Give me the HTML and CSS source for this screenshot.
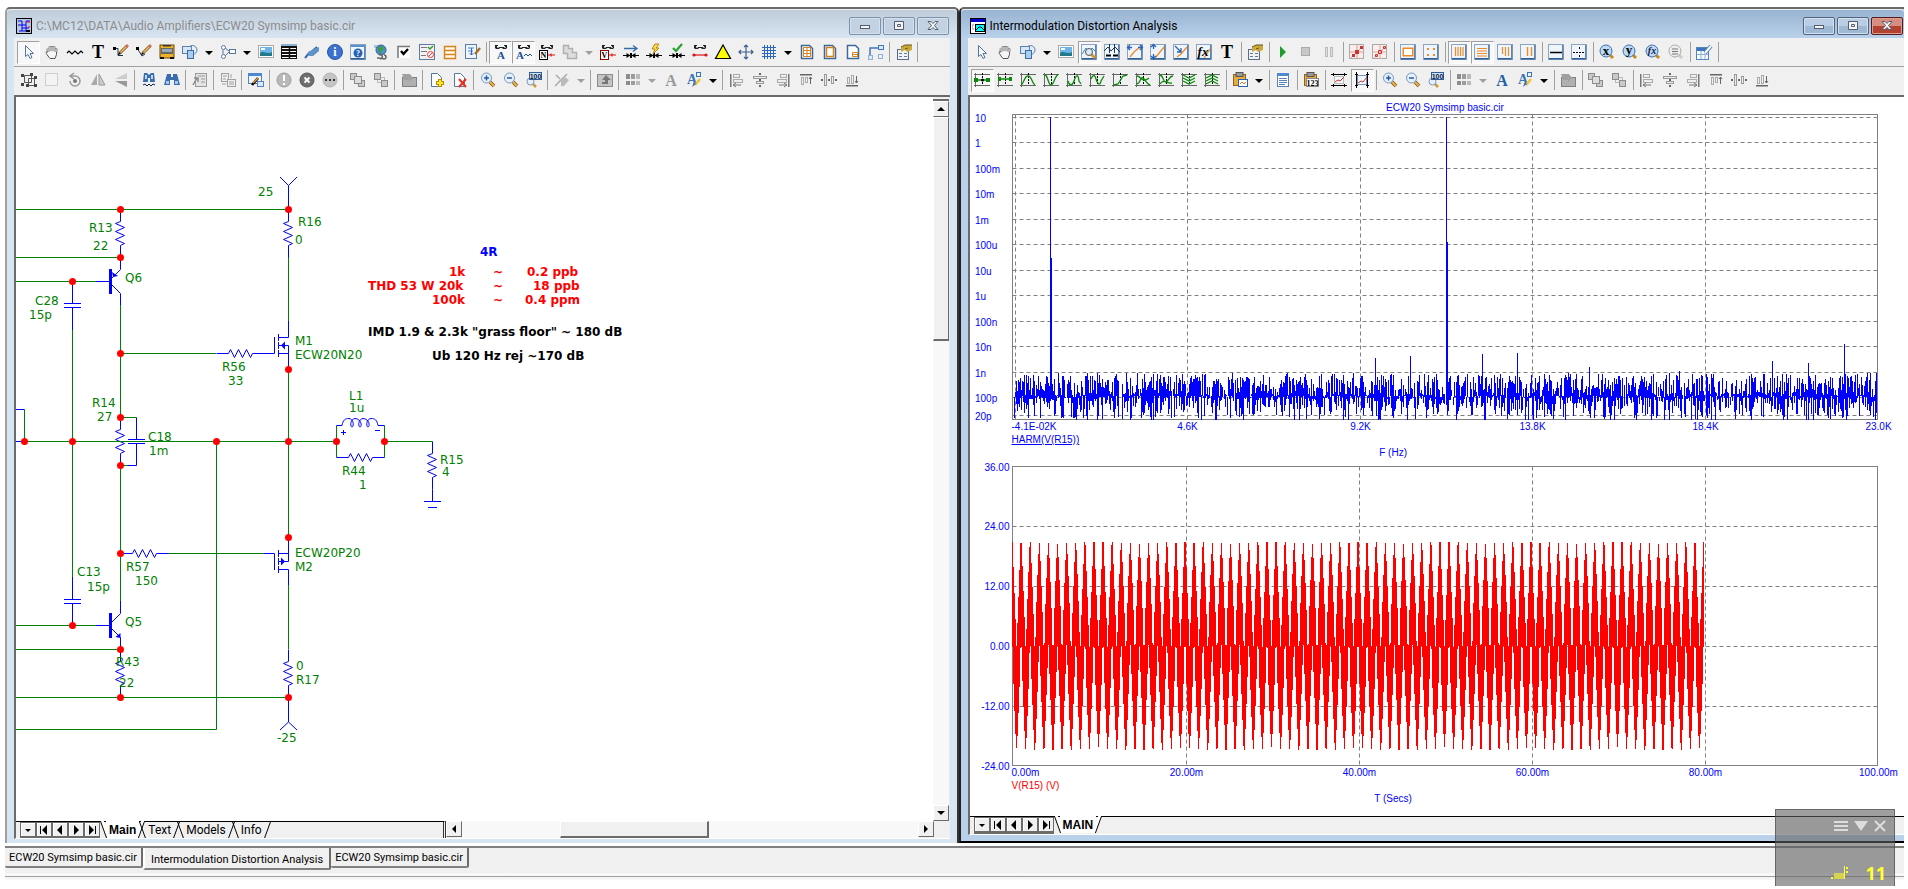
FILE: index.html
```html
<!DOCTYPE html>
<html lang="en">
<head>
    <meta charset="UTF-8">
    <meta name="viewport" content="width=device-width, initial-scale=1.0">
    <title>Intermodulation Distortion Analysis</title>
    <link rel="stylesheet" href="styles.css">
</head>
<body>

    <main class="desktop">
        <div class="windows">

            <!-- schematic window -->
            <section class="window schematic">
                <header class="titlebar">
                    <svg class="app-icon" width="16" height="16" viewBox="0 0 16 16"><rect x=".5" y=".5" width="15" height="15" fill="#b8c8dc" stroke="#000"/><path d="M2 3H6V13M2 7H10V3H14M10 7V13H3M6 10H13" fill="none" stroke="#00f"/><path d="M11 4H14M12 9H14" stroke="red"/><path d="M10 13H14" stroke="#000" stroke-width="2"/></svg>
                    <h1>C:\MC12\DATA\Audio Amplifiers\ECW20 Symsimp basic.cir</h1>
                    <div class="window-buttons">
                        <button aria-label="Minimize"><svg width="12" height="12"><rect x="1.5" y="5.5" width="9" height="3"/></svg></button>
                        <button aria-label="Restore"><svg width="12" height="12"><path d="M1.500 1.500h9v8h-9zM4.500 4.500h3v2h-3z"/></svg></button>
                        <button aria-label="Close"><svg width="12" height="12"><path d="M1 1.500h3l2 2 2-2h3L7.500 5.500 11 9.500H8l-2-2-2 2H1l3.500-4z"/></svg></button>
                    </div>
                </header>
                <div class="client">
                    <div class="toolbar" data-items="cursor* hand wave bold wire wire2 bus shapes v flow v picture table brush info help globe check form rows docpen | eyeA* eyeW* eyeN steps g eyeV current power condition eyeR warn cross grid v winGrid winBox pageBox link | props |"></div>
                    <div class="toolbar" data-items="select box rotate flipH flipV | find binoc | script | copybox | editwin | excl xcirc dots | front back | folder | newpage delpage | zoomin zoomout zoom100 | pengray g | folderup | swatch g fontgray fontpaint v | al ac ar at am ab"></div>
                    <div class="sheet-area">
                        <svg class="drawing" role="img" aria-label="Amplifier output stage">
                            <g transform="translate(-16 -97)">
                                <g class="wire">
                                    <path d="M16 209.500H288.500M16 257.500H120.500M16 281.500H96M72.500 330V577M16 625.500H96M120.500 305V417.500H136.500M120.500 465.500V601M120.500 465.500H128M24.500 409.500V441.500M24.500 441.500H336.500M384.500 441.500H432.500M216.500 441.500V729.500H16M16 649.500H120.500M16 697.500H288.500M288.500 257V321M288.500 369.500V537.500M288.500 585V649M120.500 353.500H216M168 553.500H264M336.500 425.500V457.500M384.500 425.500V457.500"/>
                                </g>
                                <g class="part">
                                    <path d="M288.500 209.500V185.500L280 177M288.500 185.500L297 177M288.500 697.500V722L280 730M288.500 722L297 730"/>
                                    <path d="M72.500 281.500V303.500M64 303.500H81M64 307.500H81M72.500 307.500V330"/>
                                    <path d="M72.500 577V599.500M64 599.500H81M64 603.500H81M72.500 603.500V625.500"/>
                                    <path d="M136.500 417.500V439.500M128 439.500H145M128 443.500H145M136.500 443.500V465.500H128"/>
                                    <path d="M96 281.500H110M120.500 257.500V269.500L112 278M112 285L120.500 293.500V305"/>
                                    <path d="M96 625.500H110M120.500 601V613.500L112 622M112 629L120.500 637.500V649.500"/>
                                    <path class="solid" d="M109 269h3v25h-3zM109 613h3v25h-3zM112 272l6 4-5 1zM120.500 633v5l-5-1z"/>
                                    <path d="M16 409.500H24.500M16 441.500H24.500"/>
                                    <path d="M264 353.500H274.500V337M278.500 334V341M278.500 342V349M278.500 350V357M278.500 337.500H288.500V321M278.500 345.500H288.500V369.500M278.500 353.500H288.500"/>
                                    <path d="M264 553.500H274.500V570M278.500 550V557M278.500 558V565M278.500 566V573M278.500 553.500H288.500M278.500 561.500H288.500V537.500M278.500 569.500H288.500V585"/>
                                    <path class="solid" d="M281 345.500l4-4v8zM285 561.500l-4-4v8z"/>
                                    <path d="M336.500 425.500H342C343 420 345 418.500 349 418.500C354 419 354 427 352 427C350 427 350 419 355 418.500C362 419 362 427 360 427C358 427 358 419 363 418.500C370 419 370 427 368 427C366 427 366 419 371 418.500C375 418.500 377 420 378 425.500H384.500"/>
                                    <path d="M341 432.500H346M343.500 430V435M375 430.500H380"/>
                                    <path d="M432.500 489.500V501.500M424 501.500H441M428 507.500H437"/>
                                    <g id="resistors"></g>
                                </g>
                                <path class="wire" d="M24.500 441.500H336.500"/>
                                <g id="junctions" class="junction"></g>
                                <g id="part-labels" class="part-label"></g>
                                <g class="note red">
                                    <text x="449" y="276">1k</text><text x="493" y="276">~</text><text x="527" y="276">0.2 ppb</text>
                                    <text x="368" y="290">THD 53 W 20k</text><text x="493" y="290">~</text><text x="533" y="290">18 ppb</text>
                                    <text x="432" y="304">100k</text><text x="493" y="304">~</text><text x="525" y="304">0.4 ppm</text>
                                </g>
                                <g class="note blue"><text x="480" y="256">4R</text></g>
                                <g class="note">
                                    <text x="368" y="336">IMD 1.9 &amp; 2.3k "grass floor" ~ 180 dB</text>
                                    <text x="432" y="360">Ub 120 Hz rej ~170 dB</text>
                                </g>
                            </g>
                        </svg>
                        <div class="vscroll">
                            <div class="splitter"></div>
                            <button class="scroll-btn" aria-label="Scroll up"><i class="up"></i></button>
                            <div class="thumb"></div>
                            <div class="track"></div>
                            <button class="scroll-btn" aria-label="Scroll down"><i class="down"></i></button>
                        </div>
                    </div>
                    <div class="sheet-bar">
                        <div class="sheet-strip">
                            <div class="sheet-nav"></div>
                            <nav class="sheets">
                                <button class="sheet active">Main</button>
                                <button class="sheet">Text</button>
                                <button class="sheet">Models</button>
                                <button class="sheet">Info</button>
                            </nav>
                        </div>
                        <div class="hscroll">
                            <button class="scroll-btn" aria-label="Scroll left"><i class="left"></i></button>
                            <div class="track before"></div>
                            <div class="thumb"></div>
                            <div class="track after"></div>
                            <button class="scroll-btn" aria-label="Scroll right"><i class="right"></i></button>
                        </div>
                        <div class="corner"></div>
                    </div>
                </div>
            </section>

            <!-- analysis window -->
            <section class="window analysis">
                <header class="titlebar">
                    <svg class="app-icon" width="16" height="16" viewBox="0 0 16 16"><rect x=".5" y=".5" width="15" height="15" fill="#fff" stroke="#000"/><rect x="1" y="1" width="14" height="3" fill="#00c"/><path d="M2 7h2M2 9h1M2 11h2" stroke="#888"/><rect x="5.500" y="6.500" width="9" height="7" fill="#0ff" stroke="#000"/><path d="M6 12l3-3h2l3 3" fill="none" stroke="#000"/></svg>
                    <h2>Intermodulation Distortion Analysis</h2>
                    <div class="window-buttons">
                        <button aria-label="Minimize"><svg width="12" height="12"><rect x="1.5" y="5.5" width="9" height="3"/></svg></button>
                        <button aria-label="Restore"><svg width="12" height="12"><path d="M1.500 1.500h9v8h-9zM4.500 4.500h3v2h-3z"/></svg></button>
                        <button class="close" aria-label="Close"><svg width="12" height="12"><path d="M1 1.500h3l2 2 2-2h3L7.500 5.500 11 9.500H8l-2-2-2 2H1l3.500-4z"/></svg></button>
                    </div>
                </header>
                <div class="client">
                    <div class="toolbar" data-items="cursor hand shapes v picture zoomplot* plotcur scaleX scaleY scaleC fx bold | props | play stop pause | red1 red2 | obox odots | bars1* bars2* bars3 bars4 | hline hdash | goX goY goF golist | tablepen |"></div>
                    <div class="toolbar" data-items="c1* c2 c3 c4 c5 c6 c7 c8 c9 c10 c11 | paste v | doc | clip | tag1 tag2* | zoomin zoomout zoom100 | swatch g fontblue fontpaint v | folder | front back | al ac ar at am ab"></div>
                    <div class="plots" id="plots"></div>
                    <div class="sheet-bar">
                        <div class="sheet-strip">
                            <div class="sheet-nav"></div>
                            <nav class="sheets">
                                <button class="sheet active">MAIN</button>
                            </nav>
                        </div>
                    </div>
                </div>
            </section>
        </div>

        <nav class="doc-tabs">
            <button class="doc-tab">ECW20 Symsimp basic.cir</button>
            <button class="doc-tab active">Intermodulation Distortion Analysis</button>
            <button class="doc-tab">ECW20 Symsimp basic.cir</button>
        </nav>
        <div class="status"></div>
    </main>

    <aside class="overlay">
        <div class="overlay-tools">
            <button aria-label="Menu"><svg width="14" height="12"><path d="M0 2h14M0 6h14M0 10h14" stroke="#ddd" stroke-width="2"/></svg></button>
            <button aria-label="Collapse"><svg width="14" height="12"><path d="M0 1h14L7 11z" fill="#ddd"/></svg></button>
            <button aria-label="Close"><svg width="12" height="12"><path d="M1 1l10 10M11 1L1 11" stroke="#ddd" stroke-width="2"/></svg></button>
        </div>
        <div class="overlay-count">
            <svg width="18" height="14"><path d="M0 11h2v2H0zM15 1h2v2h-2zM15 5h2v2h-2z" fill="#ff3"/><path d="M3 7h10v6H3z" fill="#d4d450"/><path d="M13.500 0v13" stroke="#ff3"/></svg>
            <span>11</span>
        </div>
    </aside>

    <script src="script.js"></script>
</body>
</html>
```
FILE: styles.css
```css
* {
    box-sizing: border-box;
}
body {
    margin: 0;
    background: #fff;
    font-family: Roboto, "Liberation Sans", Arial, sans-serif;
    font-size: 11px;
    color: #000;
}
button {
    margin: 0;
    padding: 0;
    border: none;
    background: none;
    font: inherit;
    color: inherit;
}
.desktop {
    display: flex;
    flex-direction: column;
    height: 100vh;
    padding: 7px 4px 8px 5px;
    overflow: hidden;
}
.windows {
    display: flex;
    flex: 1;
    min-height: 0;
}

/* windows */
.window {
    display: flex;
    flex-direction: column;
    min-width: 0;
    padding: 0 7px 4px 7px;
    border: 1px solid #6b6b6b;
    border-width: 2px 2px 0 2px;
    border-radius: 5px 5px 0 0;
    background: #d7e4f2;
}
.schematic {
    flex: 935 1 0;
    border-left-color: #a0a0a0;
    border-right-color: #333;
}
.analysis {
    flex: 936 1 0;
    padding: 0 0 6px 7px;
    border-bottom: 2px solid #000;
    border-right: none;
    border-left: 2px solid #222;
    border-radius: 5px 0 0 0;
    background: #b9d1ea;
}
.titlebar {
    display: flex;
    flex: none;
    align-items: center;
    height: 29px;
    margin: 0 -7px;
    padding: 4px 8px 0 9px;
    background: linear-gradient(#bfcddb, #d7e4f2);
    border-top: 1px solid #eee;
    border-radius: 4px 4px 0 0;
}
.schematic .titlebar {
    color: #8c8c8c;
}
.analysis .titlebar {
    margin-right: 0;
    padding-right: 1px;
    background: linear-gradient(#99b4d1, #b9d1ea);
}
.titlebar h1,
.titlebar h2 {
    flex: 1;
    margin: 0 0 0 4px;
    font-size: 12px;
    font-weight: normal;
    white-space: nowrap;
}
.app-icon {
    flex: none;
}
.window-buttons {
    display: flex;
    gap: 2px;
    align-self: flex-start;
    margin-top: 3px;
}
.window-buttons button {
    width: 32px;
    height: 18px;
    border: 1px solid #8090aa;
    border-radius: 2px;
    background: #c3d2e2;
    box-shadow: inset 0 0 0 1px #d5e1ee;
    line-height: 0;
}
.window-buttons svg {
    fill: #f4f4f4;
    stroke: #525d70;
}
.analysis .window-buttons button {
    border-color: #51647f;
    background: linear-gradient(#b9cde4 50%, #9fb8d3 50%);
}
.analysis .window-buttons .close {
    border-color: #561b1b;
    background: linear-gradient(#d68e80 50%, #b5412f 50%);
    box-shadow: inset 0 0 0 1px #dd9d90;
}
.client {
    display: flex;
    flex: 1;
    flex-direction: column;
    min-height: 0;
    background: #f0f0f0;
}

/* toolbars */
.toolbar {
    display: flex;
    flex: none;
    align-items: center;
    height: 29px;
    padding-left: 3px;
    border-bottom: 1px solid #a0a0a0;
    overflow: hidden;
}
.toolbar + .toolbar {
    height: 30px;
    padding-bottom: 2px;
    border-bottom: 2px solid #6b6b6b;
}
.tool {
    display: flex;
    flex: none;
    align-items: center;
    justify-content: center;
    width: 23px;
    height: 23px;
}
.tool svg {
    overflow: visible;
}
.tool.pressed {
    border: 1px solid #a0a0a0;
    border-right-color: #fff;
    border-bottom-color: #fff;
    background: #f8f8f8;
}
.drop {
    flex: none;
    width: 15px;
    height: 23px;
}
.drop::before {
    content: "";
    display: block;
    width: 0;
    margin: 2px auto 0;
    border: 4px solid transparent;
    border-top-color: #000;
    border-bottom: none;
}
.drop.gray::before {
    border-top-color: #a0a0a0;
}
.sep {
    flex: none;
    width: 1px;
    height: 20px;
    margin: 0 2px;
    background: #a0a0a0;
}

/* schematic */
.sheet-area {
    display: flex;
    flex: 1;
    min-height: 0;
    border-left: 2px solid #6b6b6b;
    background: #fff;
}
.drawing {
    flex: 1;
    min-width: 0;
    height: 100%;
    font-family: "DejaVu Sans", Verdana, sans-serif;
    font-size: 12px;
}
.wire {
    fill: none;
    stroke: #007f00;
}
.part {
    fill: none;
    stroke: #00f;
}
.solid {
    fill: #00f;
    stroke: none;
}
.junction {
    fill: red;
}
.part-label {
    fill: #007f00;
}
.note {
    font-weight: bold;
}
.red,
.plots .red {
    fill: red;
}
.blue {
    fill: #00f;
}

/* scrollbars */
.vscroll {
    display: flex;
    flex: none;
    flex-direction: column;
    width: 17px;
    border-right: 1px solid #e8e8e8;
}
.splitter {
    height: 4px;
    border-bottom: 2px solid #6b6b6b;
    background: #f0f0f0;
}
.scroll-btn {
    display: flex;
    flex: none;
    align-items: center;
    justify-content: center;
    width: 16px;
    height: 16px;
    border: 1px solid #fff;
    border-right-color: #6b6b6b;
    border-bottom-color: #6b6b6b;
    background: #f0f0f0;
}
.scroll-btn i {
    border: 4px solid transparent;
}
.scroll-btn .up {
    border-top: none;
    border-bottom-color: #000;
}
.scroll-btn .down {
    border-bottom: none;
    border-top-color: #000;
}
.scroll-btn .left {
    border-left: none;
    border-right-color: #000;
}
.scroll-btn .right {
    border-right: none;
    border-left-color: #000;
}
.vscroll .thumb {
    flex: 32 1 0;
    border: 1px solid #fff;
    border-right-color: #6b6b6b;
    border-bottom: 2px solid #6b6b6b;
    background: #f0f0f0;
}
.vscroll .track {
    flex: 67 1 0;
}
.track {
    background: #f8f8f8;
}
.hscroll {
    display: flex;
    flex: 488 1 0;
}
.hscroll .before {
    flex: 98 1 0;
}
.hscroll .thumb {
    flex: 146 1 0;
    border: 1px solid #fff;
    border-right: 2px solid #6b6b6b;
    border-bottom: 2px solid #6b6b6b;
    background: #f0f0f0;
}
.hscroll .after {
    flex: 209 1 0;
}
.corner {
    width: 16px;
}

/* sheet tabs */
.sheet-bar {
    display: flex;
    flex: none;
    height: 18px;
    background: #f0f0f0;
    border-left: 2px solid #6b6b6b;
    border-bottom: 1px solid #fff;
}
.sheet-strip {
    display: flex;
    flex: 423 1 0;
    padding-left: 4px;
    border-top: 1px solid #000;
    border-right: 3px double #333;
}
.sheet-nav {
    display: flex;
    flex: none;
    background: #6b6b6b;
}
.sheet-nav button {
    display: flex;
    align-items: center;
    justify-content: center;
    width: 16px;
    height: 15px;
    border: 1px solid #6b6b6b;
    background: #f0f0f0;
    box-shadow: inset 1px 1px #fff;
}
.sheets {
    display: flex;
    padding-left: 6px;
}
.sheet {
    position: relative;
    height: 16px;
    padding: 0 3px;
    margin-right: 9px;
    font-size: 12px;
}
.sheet::before,
.sheet::after {
    content: "";
    position: absolute;
    top: 0;
    bottom: 0;
    left: -3px;
    width: 3px;
    border-left: 1px solid #000;
    transform: skewX(20deg);
}
.sheet::after {
    left: auto;
    right: -3px;
    border-left: none;
    border-right: 1px solid #000;
    transform: skewX(-20deg);
}
.sheet.active {
    height: 17px;
    margin-top: -1px;
    margin-right: 6px;
    background: #fff;
    font-family: "Liberation Sans", Arial, sans-serif;
    font-weight: bold;
}
.sheet.active::before,
.sheet.active::after {
    background: #fff;
}

/* plots */
.plots {
    flex: 1;
    min-height: 0;
    border-left: 2px solid #6b6b6b;
    background: #fff;
    overflow: hidden;
}
.analysis .sheet-bar {
    height: 19px;
}
.analysis .sheet-strip {
    border-right: none;
}
.plots svg {
    display: block;
    font-family: "Liberation Sans", Arial, sans-serif;
    font-size: 10px;
    fill: #00f;
}
.plots .frame {
    fill: none;
    stroke: #808080;
}
.plots .gridline {
    fill: none;
    stroke: #808080;
    stroke-dasharray: 4 3;
}
.plots .spectrum {
    fill: none;
    stroke: #00f;
    shape-rendering: crispEdges;
}
.plots .signal {
    fill: none;
    stroke: red;
    shape-rendering: crispEdges;
}
.end {
    text-anchor: end;
}
.middle {
    text-anchor: middle;
}
.underline {
    text-decoration: underline;
}

/* document tabs */
.doc-tabs {
    display: flex;
    flex: none;
    align-items: flex-start;
    height: 31px;
    margin-top: 3px;
    border-top: 2px solid #808080;
    border-bottom: 1px solid #a0a0a0;
    background: #f0f0f0;
    box-shadow: inset 0 -3px #f8f8f8;
}
.doc-tab {
    height: 20px;
    padding: 0 4px;
    border-right: 2px solid #6b6b6b;
    border-bottom: 2px solid #808080;
    border-radius: 0 0 2px 2px;
    white-space: nowrap;
}
.doc-tab.active {
    height: 22px;
    padding: 2px 6px 0;
    border-left: 2px solid #fff;
}
.status {
    flex: none;
    height: 4px;
    background: linear-gradient(#f0f0f0, #fff);
}

/* recorder overlay */
.overlay {
    position: absolute;
    right: 13px;
    bottom: 3px;
    display: flex;
    flex-direction: column;
    justify-content: space-between;
    width: 120px;
    height: 77px;
    padding: 10px 8px 4px;
    border: 1px solid rgba(70, 70, 70, 0.6);
    border-bottom: none;
    background: rgba(95, 95, 95, 0.6);
}
.overlay-tools {
    display: flex;
    justify-content: flex-end;
    gap: 6px;
    height: 12px;
    line-height: 0;
}
.overlay-count {
    display: flex;
    justify-content: flex-end;
    align-items: center;
    gap: 16px;
    color: #ff3;
    font-family: "Noto Sans", sans-serif;
    font-size: 18px;
    font-weight: bold;
    line-height: 18px;
}
```
FILE: script.js
```js
// ---------- icon helpers ----------
const line = (d, c, w = 1, f = "none") => `<path d="${d}" fill="${f}" stroke="${c}" stroke-width="${w}"/>`;
const fill = (d, c) => `<path d="${d}" fill="${c}"/>`;
const rect = (x, y, w, h, f, s = "none") => `<rect x="${x}" y="${y}" width="${w}" height="${h}" fill="${f}" stroke="${s}"/>`;
const dot = (x, y, r, f, s = "none") => `<circle cx="${x}" cy="${y}" r="${r}" fill="${f}" stroke="${s}"/>`;
const letter = (x, y, t, c, size, font = "Liberation Serif") =>
    `<text x="${x}" y="${y}" fill="${c}" font-size="${size}" font-weight="bold" font-family="${font}, serif" text-anchor="middle">${t}</text>`;

const glasses = fill("M2 1h3v1H4v1h8V2h-1V1h3v3l-1 1h-3L9 4H7L6 5H3L2 4z", "#222") + fill("M4 3h2v1H4zM11 3h2v1h-2z", "#8ab");
const pencil = line("M14.500 1.500L7 9", "#7a4a10", 3) + line("M14 2L7.500 8.500", "#f0bd6a", 1.600) + line("M15 1l-2 2", "#d96b5a", 2.200) + fill("M5 11l1-3 2 2z", "#000");
const blueWin = rect(.5, .5, 15, 15, "#eef5fc", "#8aa4c2") + rect(1, 14, 14, 1.5, "#2f5f95") + rect(14, 1, 1.5, 14, "#5f84ad");
const magnifier = line("M10 10l4 4", "#7a5320", 3.500) + line("M10 10l4 4", "#edb547", 2) + dot(6.500, 6, 5, "#e4f1fc", "#7797b9");
const bluePage = line("M2.500 1.500h8l3 3v10h-11z", "#3f6797", 1.500, "#fff");
const grayBox = (x, y) => rect(x + .5, y + .5, 6, 6, "#c9c9c9", "#8c8c8c");
const clipboard = rect(1.500, 2.500, 12, 11, "#e9ab3e", "#8a6420") + rect(4, .5, 7, 4, "#999", "#555");
const axes = line("M1.500 1v14M0 13.500h16M0 2.500h16", "#666") + line("M8.500 1v12", "#000").replace("/>", ' stroke-dasharray="2 1"/>');
const curve = d => axes + line(d, "#0a8a0a", 1.300);
const diode = line("M0 11.500h16M7.500 9v5M8.500 9v5", "#000") + fill("M3.500 9v5l4-2.500zM12.500 9v5l-4-2.500z", "#000");
const goIcon = t => line("M11 11l3 3", "#c88a20", 3) + dot(7, 7, 6, "#bcd9f7", "#3f70ae") + t;

const icons = {
    cursor: line("M4.500 1.500v11l2.500-2 2 4 2-1-2-4h3.500z", "#57739b", 1, "#f5faff"),
    hand: line("M4 8V4.500M6 7V2.500M8 7V2M10 7V2.500M12 8V4.500", "#555", 2.600) + line("M4 8V4.500M6 7V3M8 7V2.500M10 7V3M12 8V5", "#f6f6f6", 1.200) + line("M4 8c-3-1-2 1 0 4l2 2.500h5l1.500-4V8", "#555", 1, "#f6f6f6"),
    wave: line("M0 9l2-2 3 3 3-3 3 3 3-3 2 2", "#000", 1.200),
    bold: letter(8, 14, "T", "#000", 18),
    wire: line("M1 4.500h4v7h5", "#234") + rect(0, 3, 3, 3, "#000") + pencil,
    wire2: line("M1 4l5 8 3-2", "#234") + rect(0, 3, 3, 3, "#000") + pencil,
    bus: rect(1, 1, 14, 13, "#f0b22b", "#6b4a00") + rect(2, 4, 12, 6, "#666") + rect(3, 5, 10, 3, "#9ab") + rect(1, 13, 4, 2, "#111") + rect(11, 13, 4, 2, "#111") + rect(4, 1, 8, 1.500, "#333"),
    shapes: dot(10.500, 6, 4.500, "#e3effa", "#5b7fae") + rect(.5, 2.500, 9, 7, "#d7e7f7", "#5b7fae") + rect(5.500, 6.500, 6, 8, "#a9cdef", "#3f6ca4"),
    flow: line("M3 6v4M5 4l4 3M5 12l4-4", "#56779f") + dot(3.500, 3.500, 2, "#fff", "#56779f") + dot(3.500, 12.500, 2, "#fff", "#56779f") + rect(9.500, 5.500, 6, 4, "#fff", "#56779f"),
    picture: rect(.5, 1.500, 15, 12, "#fff", "#aaa") + rect(2, 3, 12, 9, "#6cb5ec") + fill("M2 9c4-3 6 2 12-1v4H2z", "#257a8a") + fill("M3 4h4v2H3z", "#fff"),
    table: rect(0, 0, 16, 15, "#111") + rect(0, 0, 16, 2, "#8fb1d8") + line("M1 4.500h14M1 7.500h14M1 10.500h14M1 13.500h14", "#fff") + line("M8.500 2v13", "#111", 1.500),
    brush: line("M1 14l5-6M6 9l7-6M8 11l6-5", "#386ba8", 2) + fill("M4 8l6-3 5-2v4l-6 5H5z", "#5e92cb"),
    info: dot(8, 8, 7.500, "#3b72cf", "#2c57a5") + letter(8, 12, "i", "#fff", 12),
    help: blueWin + rect(1, 1, 14, 2, "#5a8fcf") + dot(8, 9, 4.500, "#2463b6") + letter(8, 12, "?", "#fff", 8),
    globe: fill("M1 1h4v3H1z", "#a9c4e6") + dot(8, 6, 5, "#4c90cf", "#36648f") + fill("M5 3l4-1 2 3-3 2v3L5 7z", "#3e9c46") + line("M6 11a2 2 0 1 1 0 3h-2M11 11a2 2 0 1 1 0 4l-3-1", "#666", 1.500),
    check: rect(2, 2, 12, 12, "#fff") + line("M2 14V2.500h12", "#777", 1.500) + line("M5 7l2.500 3L12 5", "#000", 2.400),
    form: rect(.5, .5, 15, 15, "#f2f2f2", "#5d7ba3") + line("M2 3.500h6M2 7.500h6M2 11.500h5", "#777") + line("M9 3l2 2 3-3", "#2e9b2e", 1.500) + dot(11.500, 10.500, 3, "#fff", "#e33") + line("M9.500 12.500l4-4", "#e33"),
    rows: line("M2.500 2.500h11v12h-11zM2.500 6.500h11M2.500 10.500h11", "#d6831c", 1.400, "#fff8ec"),
    docpen: rect(.5, .5, 11, 14, "#eef5fc", "#5d7ba3") + line("M3 4h6M3 7h5", "#48c") + line("M6.500 4v7l-2-2M6.500 11l2-2", "#36c") + line("M15 4l-5 6", "#a86d22", 2.400),
    eyeA: glasses + letter(8, 15, "A", "#1d4f9b", 11),
    eyeW: glasses + letter(4, 15, "A", "#1d4f9b", 11) + line("M8 12l2-2 2 2 2-2 2 2", "#1d4f9b"),
    eyeN: glasses + rect(.5, 6.500, 8, 9, "#fff", "#000") + letter(4.500, 14, "N", "#000", 8) + line("M9 11h7M12 9.500v3", "#d11", 1.200),
    eyeV: glasses + rect(.5, 6.500, 8, 9, "#fff", "#800") + letter(4.500, 14, "V", "#000", 8) + line("M9 11h7M12 9.500v3", "#d11", 1.200),
    eyeR: glasses + line("M1 11h14", "#d11", 1.200) + dot(2, 11, 1.600, "#d11") + dot(14, 11, 1.600, "#d11"),
    steps: line("M1.500 1.500h5v3h4v4h4v6h-9v-5h-4z", "#b0b0b0", 1.500, "#ddd"),
    current: diode + line("M1 4.500h13M10 1.500l4 3-4 3", "#386ba8", 1.300),
    power: diode + line("M9 0h4l-3 4h3l-6 6 2-5H6z", "#b98512", 1, "#ffe04a"),
    condition: diode + line("M4 4l3 3 6-7", "#27a22b", 2.200),
    warn: line("M8 1l7.500 13.500H.5z", "#000", 1.200, "#ff0"),
    cross: line("M8 1v14M1 8h14M6 3l2-2 2 2M6 13l2 2 2-2M3 6L1 8l2 2M13 6l2 2-2 2", "#41618c", 1.200),
    grid: line("M1 3.500h14M1 6.500h14M1 9.500h14M1 12.500h14M3.500 1v14M6.500 1v14M9.500 1v14M12.500 1v14", "#2d66bd"),
    winGrid: bluePage + line("M4.500 3.500h7v9h-7zM8 3v9M4 6.500h7M4 9.500h7", "#d6831c"),
    winBox: bluePage + line("M4.500 3.500h7v9h-7z", "#d6831c", 1.500),
    pageBox: bluePage + line("M7.500 8.500h5v4h-5zM7 10.500h5", "#d6831c"),
    link: line("M2 14V4h8", "#3f74be", 1.500) + rect(10.500, 1.500, 5, 4, "#dbe9f8", "#3f74be") + rect(.5, 11.500, 4, 4, "#dbe9f8", "#8fb1d8") + rect(10.500, 10.500, 4, 4, "none", "#8fb1d8"),
    props: rect(1.500, 5.500, 11, 10, "#f2f2f2", "#556c8c") + line("M3 9.500h3M3 12.500h3M8 9.500h3M8 12.500h3", "#5d7ba3") + fill("M5 3l4-2h7v5l-5 2-2-2-4 2z", "#caa93c") + line("M5 3l4-2h7M9 5l3-1", "#6b5715"),

    select: line("M3.500 3.500h7v7h-7z", "#555") + line("M7.500 6.500h6v7h-6z", "#555") + fill("M0 2h3v3H0zM9 1h3v3H9zM0 11h3v3H0zM13 4h3v3h-3zM13 12h3v3h-3zM5 12h3v3H5z", "#444"),
    box: rect(1.500, 1.500, 12, 12, "#f3f3f3", "#cfcfcf"),
    rotate: line("M3 9a5 5 0 1 0 5-5H4M7 1L3 4l4 3", "#9a9a9a", 1.500) + dot(8, 9, 2, "#777"),
    flipH: fill("M7 2v11H1z", "#aaa") + fill("M9 2v11h6z", "#ccc") + line("M9 2v11h6z", "#999"),
    flipV: fill("M14 1v6H2z", "#ccc") + fill("M14 15V9H2z", "#999"),
    find: fill("M3 1h3l2 2 2-2h3l1 9H9V6H7v4H2z", "#3a6cb0") + fill("M4 3h2v4H4zM10 3h2v4h-2z", "#bcd6f2") + line("M2 13l2-1 2 2 2-2 2 2 2-2 2 1", "#124"),
    binoc: fill("M3 2h4v3h2V2h4l3 11h-6V8H6v5H0z", "#3a6cb0") + fill("M2 9h3v3H2zM11 9h3v3h-3z", "#a7c8ee"),
    script: rect(3.500, 1.500, 11, 13, "#e4e4e4", "#9a9a9a") + line("M6 4h7M9 7h4M9 10h4", "#9a9a9a") + line("M1 13l4-7M2 6h4v4", "#8a8a8a", 1.500),
    copybox: rect(1.500, 1.500, 7, 8, "#eee", "#a0a0a0") + rect(7.500, 7.500, 8, 7, "#eee", "#a0a0a0") + line("M3 4h4M3 7h3M9 10h5M9 12h5M11 2v4M2 12h4", "#a0a0a0"),
    editwin: rect(.5, 1.500, 13, 10, "#eef5fc", "#5584bc") + rect(1, 1, 13, 3, "#4d88d2") + rect(9.500, 9.500, 6, 5, "#dbe9f8", "#5584bc") + line("M4 13l6-7", "#000", 2.600) + line("M5 11l5-5", "#e9a23b", 1.400),
    excl: dot(8, 8, 7, "#b9b9b9", "#9c9c9c") + rect(7, 3, 2, 6, "#fff") + rect(7, 11, 2, 2, "#fff"),
    xcirc: dot(8, 8, 7, "#6e6e6e", "#555") + line("M5.500 5.500l5 5M10.500 5.500l-5 5", "#fff", 2),
    dots: dot(8, 8, 7, "#c4c4c4", "#b4b4b4") + fill("M3 7h2v2H3zM7 7h2v2H7zM11 7h2v2h-2z", "#333"),
    front: grayBox(0, 1) + grayBox(8, 8) + rect(4.500, 4.500, 7, 7, "#ddd", "#8c8c8c"),
    back: rect(4.500, 5.500, 7, 5, "#eee", "#bbb") + grayBox(1, 1) + grayBox(8, 8),
    folder: rect(1.500, 5.500, 14, 9, "#b0b0b0", "#808080") + fill("M1 2h8l3 4-4 4V8H3z", "#a0a0a0"),
    newpage: line("M2.500 1.500h6l4 4v9h-10z", "#56779f", 1, "#fff") + line("M11 7v8M7 11h8", "#b98d00", 4) + line("M11 8v6M8 11h6", "#ffe92e", 2),
    delpage: line("M2.500 1.500h6l4 4v9h-10z", "#56779f", 1, "#fff") + line("M7 7l7 8M14 7l-7 8", "#e0301e", 2),
    zoomin: magnifier + line("M4 6h5M6.500 3.500v5", "#2658a8", 1.500),
    zoomout: magnifier + line("M4 6h5", "#2658a8", 1.500),
    zoom100: line("M7 12l3 3", "#d49a35", 2.500) + dot(4.500, 9.500, 3.500, "#e4f1fc", "#7797b9") + rect(3.500, .5, 12, 7, "#cfe3f7", "#2f5f95") + letter(9.500, 7, "100", "#124", 7, "Liberation Sans"),
    pengray: line("M1 14L13 2M2 3l4 4", "#aaa", 1.500) + fill("M7 9l4-4 4 3-5 6H7z", "#bbb"),
    folderup: rect(.5, 2.500, 15, 12, "#c4c4c4", "#8c8c8c") + fill("M9 3l5 5h-3v4H5v-2h3V8H5z", "#777"),
    swatch: fill("M1 2h4v5H1zM1 9h4v4H1z", "#8c8c8c") + fill("M6 2h4v5H6zM6 9h4v4H6z", "#9c9c9c") + fill("M11 2h4v5h-4zM11 9h4v4h-4z", "#bbb"),
    fontgray: letter(8, 14, "A", "#999", 16),
    fontblue: letter(8, 14, "A", "#1f5fa8", 16),
    fontpaint: letter(6, 12, "A", "#3a74b8", 14) + rect(10.500, .5, 4, 4, "none", "#3a74b8") + line("M14 7l-5 6", "#f1c232", 2.500) + fill("M6 15l2-5 2 2z", "#3a74b8"),
    al: rect(1, 2, 1.500, 13, "#777") + rect(4.500, 2.500, 6, 3, "#eee", "#aaa") + rect(4.500, 7.500, 9, 3, "#eee", "#aaa") + line("M4 13h8M7 11l-3 2 3 2", "#777"),
    ac: rect(1.500, 4.500, 13, 2, "#eee", "#999") + rect(4.500, 9.500, 7, 2, "#eee", "#999") + fill("M7 1h2v2H7zM7 7h2v2H7zM7 13h2v2H7z", "#666"),
    ar: rect(13, 2, 1.500, 13, "#777") + rect(5.500, 2.500, 6, 3, "#eee", "#aaa") + rect(2.500, 7.500, 9, 3, "#eee", "#aaa") + line("M4 13h8M9 11l3 2-3 2", "#777"),
    at: rect(2, 2, 12, 1.500, "#666") + rect(3.500, 5.500, 2, 7, "#eee", "#aaa") + rect(7.500, 5.500, 2, 5, "#eee", "#aaa") + line("M12.500 5v7M11 7l1.500-2L14 7", "#666"),
    am: fill("M0 7h2v2H0zM7 7h2v2H7zM14 7h2v2h-2z", "#666") + rect(3.500, 2.500, 2, 11, "#eee", "#999") + rect(10.500, 4.500, 2, 7, "#eee", "#999"),
    ab: rect(2, 13, 12, 1.500, "#666") + rect(3.500, 5.500, 2, 6, "#eee", "#aaa") + rect(7.500, 3.500, 2, 8, "#eee", "#aaa") + line("M12.500 4v7M11 9l1.500 2L14 9", "#666"),

    zoomplot: blueWin + line("M1 10l4-6 3 6 3-6 4 4", "#38c") + line("M10 10l4 4", "#d49a35", 3) + dot(8, 8, 3.500, "#dbe9f8", "#555"),
    plotcur: blueWin + line("M0 7l4-4 3 4 4-4 5 5M5.500 0v9M10.500 0v9", "#235") + line("M2 11.500h5M9 11.500h5", "#000", 2),
    scaleX: blueWin + line("M3 13l4-5 6-5", "#f08a24", 1.300) + line("M0 3.500h5M11 3.500h5M3 1L.5 3.500 3 6M13 1l2.500 2.500L13 6", "#2c62b4", 1.300),
    scaleY: blueWin + line("M6 13l4-5 4-5", "#f08a24", 1.300) + line("M3.500 0v5M3.500 10v6M1 3L3.500.5 6 3M1 12l2.500 2.500L6 12", "#2c62b4", 1.300),
    scaleC: blueWin + line("M4 13l4-3 6-7", "#f08a24", 1.300) + line("M2 2l6 6M8 4v4H4", "#2c62b4", 1.300),
    fx: blueWin + line("M8 14l6-9", "#f08a24", 1.300) + `<g font-style="italic">${letter(7, 12, "fx", "#000", 13)}</g>`,
    play: fill("M5 2l6 6-6 6z", "#1f9a2c"),
    stop: rect(3.500, 3.500, 8, 8, "#c8c8c8", "#aaa"),
    pause: rect(4.500, 3.500, 2, 9, "#ddd", "#bbb") + rect(9.500, 3.500, 2, 9, "#ddd", "#bbb"),
    red1: rect(.5, .5, 14, 14, "#fbeeea", "#aaa") + line("M1 8h14M8 1v14M2 14L13 3", "#d99") + fill("M3 10h3v3H3zM6 6h4v4H6zM11 2h3v3h-3z", "#c33"),
    red2: rect(.5, .5, 14, 14, "#fbeeea", "#aaa") + line("M1 8h14M8 1v14M2 14L13 3", "#daa") + line("M3.500 10.500h2v2h-2zM6.500 6.500h3v3h-3zM11.500 2.500h2v2h-2z", "#c33"),
    obox: blueWin + rect(3.500, 4.500, 9, 7, "#fff", "#f08a24") + rect(3, 4, 10, 8, "none", "#f08a24"),
    odots: blueWin + fill("M4 4h2v2H4zM10 4h2v2h-2zM4 10h2v2H4zM10 10h2v2h-2z", "#f08a24"),
    bars1: blueWin + line("M4.500 3v9M7 3v9M9.500 3v9M12 3v9", "#f08a24", 1.200),
    bars2: blueWin + line("M3 4.500h10M3 7h10M3 9.500h10M3 12h10", "#f08a24", 1.200),
    bars3: blueWin + line("M5.500 3v7M8.500 3v9M11.500 3v9", "#f08a24", 1.200),
    bars4: blueWin + line("M7.500 3v9M11.500 3v9", "#f08a24", 1.400),
    hline: blueWin + line("M2 8.500h12", "#000", 1.500),
    hdash: blueWin + line("M2 8.500h2M5 8.500h2M8 8.500h2M11 8.500h2M8.500 3v2M8.500 11v2", "#000"),
    goX: goIcon(letter(7, 11, "x", "#000", 13)),
    goY: goIcon(letter(7, 10, "y", "#000", 13)),
    goF: goIcon(`<g font-style="italic">${letter(7, 10, "fx", "#124", 10)}</g>`),
    golist: line("M11 11l3 3", "#ccc", 3) + dot(7, 7, 6, "#eee", "#aaa") + line("M4 5h6M4 7.500h6M4 10h6", "#777"),
    tablepen: rect(.5, 3.500, 12, 12, "#f5faff", "#5584bc") + rect(1, 4, 12, 3, "#3f74be") + line("M1 10.500h11M5 7v8M9 7v8", "#8fb1d8") + line("M15 2L9 9", "#5b82b3", 4) + line("M15 2L9 9", "#f5faff", 2),

    c1: axes + line("M0 8h16", "#0a8a0a", 1.500) + fill("M0 6h4v4H0zM12 6h4v4h-4z", "#0a8a0a") + dot(8.500, 8, 1.500, "#000"),
    c2: axes + line("M2 7h13", "#0a8a0a", 1.500) + fill("M1 5h3v4H1zM12 5h3v4h-3z", "#0a8a0a"),
    c3: curve("M1 13C4 12 4 4 8 4s4 8 7 9"),
    c4: curve("M2 3c3 0 3 10 6 10s4-10 7-10"),
    c5: curve("M2 9c1 4 4 6 6 0s4-8 5 0l2 3"),
    c6: curve("M2 7c2-5 4-4 5 0s4 8 5 2l3-5"),
    c7: curve("M2 13l4-1 5-8 4-1"),
    c8: curve("M2 12c4-1 3-8 6-6s3 6 7 7M2 4c4 0 5 8 12 2"),
    c9: curve("M2 3c4 1 3 8 6 7s3-6 7-6M2 12c4-6 6 0 12-1"),
    c10: curve("M2 3l6 3 6-3M2 6l6 3 6-3M2 9l6 3 6-3"),
    c11: curve("M2 6l6-3 6 3M2 9l6-3 6 3M2 12l6-3 6 3"),
    paste: clipboard + rect(6.500, 7.500, 9, 7, "#fff", "#2c62b4") + line("M8 12l2-2 2 2 2-2", "#d73"),
    doc: rect(2.500, 1.500, 11, 13, "#fff", "#5b82b3") + rect(3, 1, 11, 3, "#4d88d2") + line("M4 6.500h8M4 8.500h8M4 10.500h8M4 12.500h6", "#5b82b3"),
    clip: clipboard + rect(3.500, 6.500, 12, 8, "#fff", "#888") + letter(9.500, 14, "123", "#000", 8),
    tag1: rect(3.500, 4.500, 9, 7, "#f8f8f8", "#bbb") + line("M4 10l3-2 2 1 4-4", "#c33") + line("M0 2.500h16M0 13.500h16M2.500 1v3M13.500 1v3M2.500 12v3M13.500 12v3", "#000"),
    tag2: rect(3.500, 3.500, 9, 9, "#f0f6ff", "#7797b9") + line("M4 11l3-2 2 1 4-5", "#c33") + line("M2.500 0v16M13.500 0v16M1 2.500h3M12 2.500h3M1 13.500h3M12 13.500h3", "#000")
};

document.querySelectorAll(".toolbar").forEach(bar => {
    bar.innerHTML = bar.dataset.items.split(" ").map(item => {
        if (item === "|") return '<span class="sep"></span>';
        if (item === "v") return '<button class="drop" aria-label="More"></button>';
        if (item === "g") return '<button class="drop gray" aria-label="More"></button>';
        const name = item.replace("*", "");
        const cls = item.endsWith("*") ? "tool pressed" : "tool";
        return `<button class="${cls}" aria-label="${name}"><svg width="16" height="16" viewBox="0 0 16 16">${icons[name]}</svg></button>`;
    }).join("");
});

// sheet navigation buttons
const navShapes = { List: "M2 4h6L5 7z", First: "M1 1h1v8H1zM8 0v10L3 5z", Previous: "M7 0v10L2 5z", Next: "M3 0v10l5-5z", Last: "M2 0v10l5-5zM8 1h1v8H8z" };
document.querySelectorAll(".sheet-nav").forEach(nav => {
    nav.innerHTML = Object.keys(navShapes).map(k =>
        `<button aria-label="${k}"><svg width="10" height="10"><path d="${navShapes[k]}"/></svg></button>`).join("");
});

// ---------- schematic ----------
const vertical = [[120, 209], [120, 417], [120, 649], [288, 209], [288, 649], [432, 441]];
const horizontal = [[216, 353], [336, 457], [120, 553]];
document.getElementById("resistors").innerHTML =
    vertical.map(([x, y]) => `<path d="M${x + .5} ${y + .5}v12l-5 2 9 4-9 4 9 4-9 4 9 4-4 2v12"/>`).join("") +
    horizontal.map(([x, y]) => `<path d="M${x + .5} ${y + .5}h12l2-4 4 8 4-8 4 8 4-8 4 8 2-4h12"/>`).join("");

const joints = [[120, 209], [288, 209], [120, 257], [72, 281], [120, 353], [288, 369], [120, 417], [24, 441], [72, 441], [216, 441],
    [288, 441], [336, 441], [384, 441], [120, 465], [288, 537], [120, 553], [72, 625], [120, 649], [120, 697], [288, 697]];
document.getElementById("junctions").innerHTML =
    joints.map(([x, y]) => `<circle cx="${x + .5}" cy="${y + .5}" r="3.5"/>`).join("");

const labels = [
    [258, 196, "25"], [298, 226, "R16"], [295, 244, "0"], [89, 232, "R13"], [93, 250, "22"], [125, 282, "Q6"],
    [35, 305, "C28"], [29, 319, "15p"], [295, 345, "M1"], [295, 359, "ECW20N20"], [222, 371, "R56"], [228, 385, "33"],
    [92, 407, "R14"], [97, 421, "27"], [148, 441, "C18"], [149, 455, "1m"], [349, 400, "L1"], [349, 412, "1u"],
    [440, 464, "R15"], [442, 476, "4"], [342, 475, "R44"], [359, 489, "1"], [295, 557, "ECW20P20"], [295, 571, "M2"],
    [126, 571, "R57"], [135, 585, "150"], [77, 576, "C13"], [87, 591, "15p"], [125, 626, "Q5"], [116, 666, "R43"],
    [119, 687, "22"], [296, 670, "0"], [296, 684, "R17"], [277, 742, "-25"]
];
document.getElementById("part-labels").innerHTML =
    labels.map(([x, y, t]) => `<text x="${x}" y="${y}">${t}</text>`).join("");

// ---------- plots ----------
const text = (x, y, t, cls = "") => `<text x="${x}" y="${y}" class="${cls}">${t}</text>`;

function drawPlots() {
    const box = document.getElementById("plots");
    const width = box.clientWidth;
    const left = 42.5;
    const right = Math.round(width - 28) + .5;
    const span = right - left;
    let out = "";

    // harmonic spectrum, log scale from 10 down to 20p
    const top = 17.5, bottom = 322.5, decade = 25.45;
    const fx = k => left + 2 + k * (span - 2) / 23;
    out += text((left + right) / 2, 14, "ECW20 Symsimp basic.cir", "middle");
    let grid = "";
    ["10", "1", "100m", "10m", "1m", "100u", "10u", "1u", "100n", "10n", "1n", "100p", "20p"].forEach((name, i) => {
        const y = Math.round(20 + decade * (i === 12 ? 11.7 : i)) + .5;
        grid += `M${left} ${y}H${right}`;
        out += text(5, y + 4, name);
    });
    ["-4.1E-02K", "4.6K", "9.2K", "13.8K", "18.4K", "23.0K"].forEach((name, i) => {
        const x = Math.round(fx(i * 4.6)) + .5;
        if (i < 5) grid += `M${x} ${top}V${bottom}`;
        out += i === 0 ? text(left - 1, 333, name) : text(x, 333, name, "middle");
    });
    out += `<path class="gridline" d="${grid}"/><rect class="frame" x="${left}" y="${top}" width="${span}" height="${bottom - top}"/>`;

    let seed = 7;
    const rnd = () => (seed = seed * 16807 % 2147483647) / 2147483647;
    let noise = "";
    for (let x = left + 2; x < right; x++) {
        const hi = 300 - 24 * Math.pow(rnd(), 1.2);
        const lo = Math.min(bottom, 299 + 26 * Math.pow(rnd(), 1.9));
        noise += `M${x} ${hi.toFixed(1)}V${lo.toFixed(1)}`;
    }
    // [frequency in kHz, top of the line]
    [[.95, 20], [.98, 161], [9.6, 261], [10.55, 259], [11.5, 20], [11.53, 145], [12.45, 257], [13.4, 256],
        [15.3, 270], [17.7, 274], [20.2, 264], [21.15, 266], [22.1, 247]].forEach(([k, y]) => {
        noise += `M${Math.round(fx(k)) + .5} ${y}V302`;
    });
    out += `<path class="spectrum" d="${noise}"/>`;
    out += text(left - 1, 346, "HARM(V(R15))", "underline");
    out += text(left + span * .44, 359, "F (Hz)", "middle");

    // output voltage, 950 Hz + 11.5 kHz
    const t0 = 369.5, t1 = 668.5, volt = (t1 - t0) / 60;
    const vy = v => t0 + (36 - v) * volt;
    grid = "";
    [36, 24, 12, 0, -12, -24].forEach(v => {
        const y = Math.round(vy(v)) + .5;
        if (v < 36 && v > -24) grid += `M${left} ${y}H${right}`;
        out += text(left - 3, y + 3, v.toFixed(2), "end");
    });
    [0, 20, 40, 60, 80, 100].forEach(ms => {
        const x = Math.round(left + ms / 100 * span) + .5;
        if (ms && ms < 100) grid += `M${x} ${t0}V${t1}`;
        out += text(ms ? x : left - 1, 679, ms.toFixed(2) + "m", ms ? "middle" : "");
    });
    out += `<path class="gridline" d="${grid}"/><rect class="frame" x="${left}" y="${t0}" width="${span}" height="${t1 - t0}"/>`;

    let wave = "";
    const perPx = 100 / span;
    for (let px = 0; px * perPx < 80; px++) {
        let min = 99, max = -99;
        for (let s = 0; s <= 20; s++) {
            const t = (px + s / 20) * perPx;
            const v = 10.45 * (Math.cos(2 * Math.PI * .95 * t) + Math.cos(2 * Math.PI * 11.5 * t));
            min = Math.min(min, v);
            max = Math.max(max, v);
        }
        wave += `M${left + px} ${vy(max).toFixed(1)}V${vy(min).toFixed(1)}`;
    }
    out += `<path class="signal" d="${wave}"/>`;
    out += text(left - 1, 692, "V(R15) (V)", "red");
    out += text(left + span * .44, 705, "T (Secs)", "middle");

    box.innerHTML = `<svg width="${width}" height="720" role="img" aria-label="Distortion plots">${out}</svg>`;
}

drawPlots();
window.addEventListener("resize", drawPlots);
```
